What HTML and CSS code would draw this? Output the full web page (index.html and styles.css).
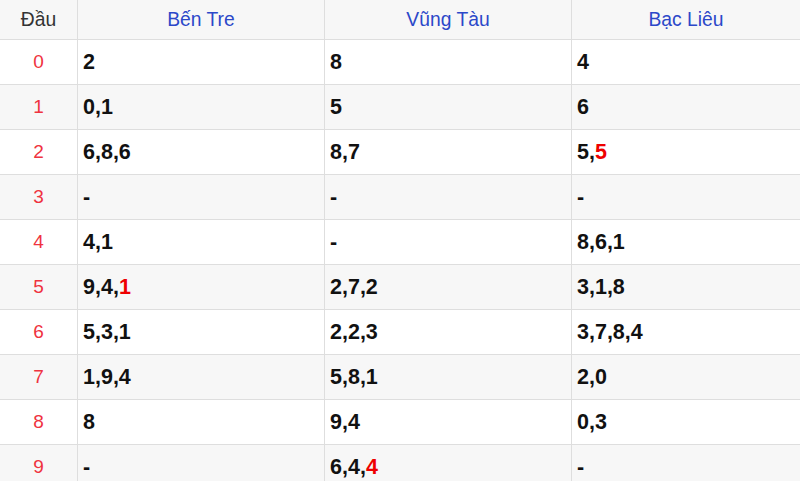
FILE: index.html
```html
<!DOCTYPE html>
<html lang="vi">
<head>
<meta charset="utf-8">
<title>Lô tô theo đầu</title>
<link rel="stylesheet" href="styles.css">
</head>
<body>
<table class="loto">
  <thead>
    <tr class="head">
      <th class="c-dau">Đầu</th>
      <th class="c-prov">Bến Tre</th>
      <th class="c-prov">Vũng Tàu</th>
      <th class="c-last">Bạc Liêu</th>
    </tr>
  </thead>
  <tbody>
    <tr><td class="dau">0</td><td>2</td><td>8</td><td>4</td></tr>
    <tr class="alt"><td class="dau">1</td><td>0,1</td><td>5</td><td>6</td></tr>
    <tr><td class="dau">2</td><td>6,8,6</td><td>8,7</td><td>5,<span class="hit">5</span></td></tr>
    <tr class="alt"><td class="dau">3</td><td>-</td><td>-</td><td>-</td></tr>
    <tr><td class="dau">4</td><td>4,1</td><td>-</td><td>8,6,1</td></tr>
    <tr class="alt"><td class="dau">5</td><td>9,4,<span class="hit">1</span></td><td>2,7,2</td><td>3,1,8</td></tr>
    <tr><td class="dau">6</td><td>5,3,1</td><td>2,2,3</td><td>3,7,8,4</td></tr>
    <tr class="alt"><td class="dau">7</td><td>1,9,4</td><td>5,8,1</td><td>2,0</td></tr>
    <tr><td class="dau">8</td><td>8</td><td>9,4</td><td>0,3</td></tr>
    <tr class="alt"><td class="dau">9</td><td>-</td><td>6,4,<span class="hit">4</span></td><td>-</td></tr>
  </tbody>
</table>
</body>
</html>
```
FILE: styles.css
```css
html, body {
  margin: 0;
  padding: 0;
  background: #ffffff;
}

.loto {
  border-collapse: separate;
  border-spacing: 0;
  table-layout: fixed;
  width: 800px;
  font-family: "Liberation Sans", Arial, sans-serif;
}

.loto th,
.loto td {
  box-sizing: border-box;
  border-right: 1px solid #dedede;
  border-bottom: 1px solid #dedede;
  padding: 0 5px;
  vertical-align: middle;
}

.loto th:last-child,
.loto td:last-child {
  border-right: none;
}

.head th {
  height: 40px;
  background: #f7f7f7;
  font-weight: normal;
  font-size: 19.3px;
  color: #2c48c9;
  text-align: center;
}

.head .c-dau {
  width: 78px;
  color: #333333;
}

.head .c-prov {
  width: 247px;
}

.head .c-last {
  width: 228px;
}

.loto tbody td {
  height: 45px;
  font-size: 21.5px;
  font-weight: bold;
  color: #111111;
  text-align: left;
}

.loto tbody tr.alt td {
  background: #f7f7f7;
}

.loto tbody td.dau {
  font-size: 19px;
  font-weight: normal;
  color: #ef3340;
  text-align: center;
}

.hit {
  color: #ee0000;
}
```
